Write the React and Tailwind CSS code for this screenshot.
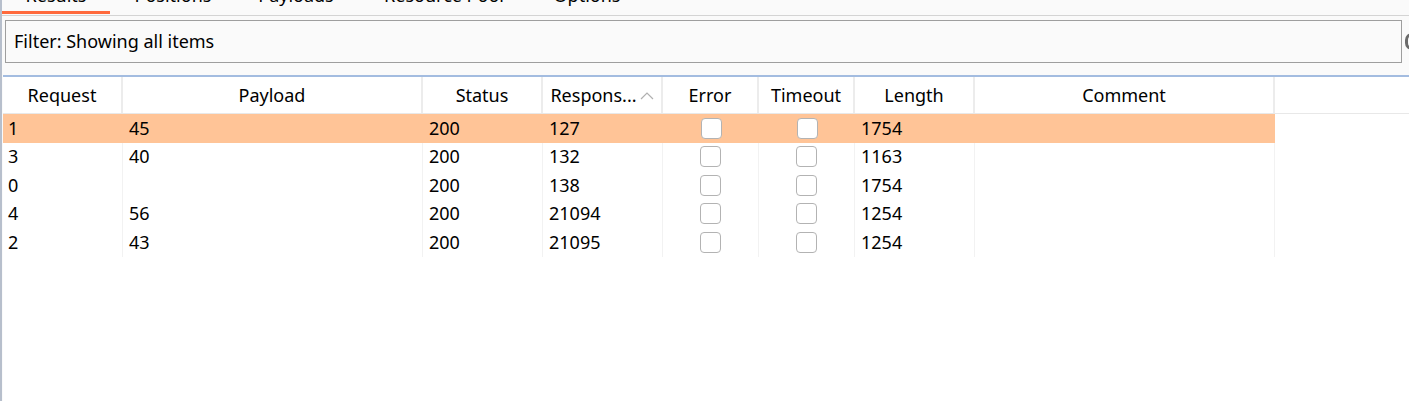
import React from 'react'

const COLS = [
  { key: 'req',     label: 'Request',     w: 'w-[120px]' },
  { key: 'payload', label: 'Payload',     w: 'w-[300px]' },
  { key: 'status',  label: 'Status',      w: 'w-[120px]' },
  { key: 'resp',    label: 'Respons...',  w: 'w-[120px]', sort: true },
  { key: 'error',   label: 'Error',       w: 'w-[96px]',  check: true },
  { key: 'timeout', label: 'Timeout',     w: 'w-[96px]',  check: true },
  { key: 'length',  label: 'Length',      w: 'w-[120px]' },
  { key: 'comment', label: 'Comment',     w: 'w-[300px]' },
]

const ROWS = [
  { req: '1', payload: '45', status: '200', resp: '127',   length: '1754', selected: true },
  { req: '3', payload: '40', status: '200', resp: '132',   length: '1163' },
  { req: '0', payload: '',   status: '200', resp: '138',   length: '1754' },
  { req: '4', payload: '56', status: '200', resp: '21094', length: '1254' },
  { req: '2', payload: '43', status: '200', resp: '21095', length: '1254' },
]

const TABS = [
  { label: 'Results',       w: 'w-[108px]' },
  { label: 'Positions',     w: 'w-[126px]' },
  { label: 'Payloads',      w: 'w-[120px]' },
  { label: 'Resource Pool', w: 'w-[176px]' },
  { label: 'Options',       w: 'w-[110px]' },
]

function Checkbox() {
  return <div className="w-[21px] h-[21px] rounded-[4px] border-[1.5px] border-[#b3b3b3] bg-white" />
}

export default function App() {
  return (
    <div className="w-[1409px] h-[401px] overflow-hidden bg-[#fafafa] border-l-2 border-[#b7bfcc] text-[18px] text-black" style={{ fontFamily: '"Noto Sans", "Liberation Sans", sans-serif' }}>

      {/* Tabs */}
      <div className="h-[16px] flex border-b border-[#d4d4d4] overflow-hidden">
        {TABS.map((t, i) => (
          <div key={t.label} className={`relative ${t.w} shrink-0 flex justify-center`}>
            <span className="mt-[-17px] leading-[24px] whitespace-nowrap">{t.label}</span>
            {i === 0 && <div className="absolute left-0 right-0 bottom-[1px] h-[3px] bg-[#ff6a3d]" />}
          </div>
        ))}
      </div>

      {/* Filter */}
      <div className="flex items-center h-[59px] pb-[11px] pt-[3px] pl-[3px] overflow-hidden">
        <div className="w-[1397px] shrink-0 h-[43px] border border-[#9e9e9e] bg-[#fafafa] flex items-center px-[8px]">
          Filter: Showing all items
        </div>
        <div className="ml-[3px] w-[14px] h-[17px] rounded-full border-[3px] border-[#6b6b6b] shrink-0" />
      </div>

      {/* Table */}
      <div className="bg-white h-full border-t-2 border-[#a3bce0] ml-[1px]">
        <div className="flex h-[37px] border-b border-[#e8e8e8]">
          {COLS.map(c => (
            <div key={c.key} className={`${c.w} shrink-0 border-r-2 border-[#ececec] flex items-center justify-center`}>
              <span>{c.label}</span>
              {c.sort && (
                <svg className="ml-[3px]" width="14" height="9" viewBox="0 0 14 9" fill="none">
                  <path d="M1 8 L7 2 L13 8" stroke="#b0b0b0" strokeWidth="1.2" />
                </svg>
              )}
            </div>
          ))}
        </div>
        {ROWS.map((r, i) => (
          <div key={i} className={`flex h-[28.5px] w-[1272px] ${r.selected ? 'bg-[#ffc497]' : ''}`}>
            {COLS.map(c => (
              <div key={c.key} className={`${c.w} shrink-0 flex items-center ${r.selected ? '' : 'border-r border-[#f2f2f2]'} ${c.check ? 'justify-center' : c.key === 'req' ? 'pl-[5px]' : 'pl-[6px]'}`}>
                {c.check ? <Checkbox /> : r[c.key]}
              </div>
            ))}
          </div>
        ))}
      </div>
    </div>
  )
}
